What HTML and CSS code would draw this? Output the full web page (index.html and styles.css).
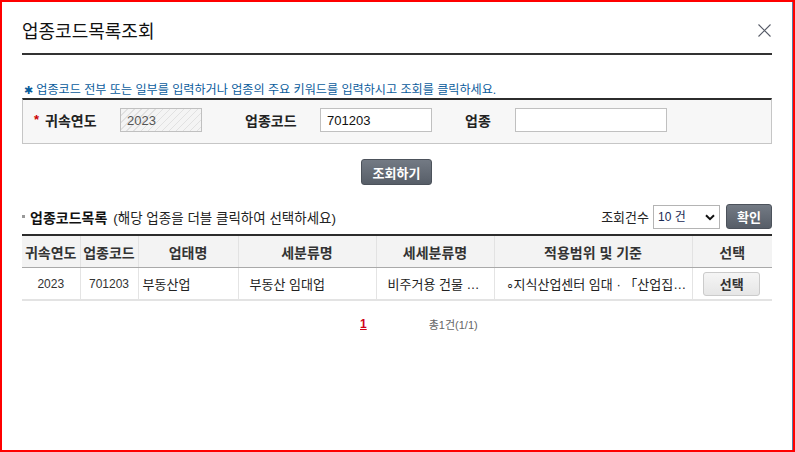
FILE: index.html
```html
<!DOCTYPE html>
<html lang="ko">
<head>
<meta charset="utf-8">
<title>업종코드목록조회</title>
<link rel="stylesheet" href="styles.css">
</head>
<body>
<div class="frame">
  <div class="dialog">
    <div class="head">
      <h1 class="title">업종코드목록조회</h1>
      <button class="close" type="button" aria-label="닫기">
        <svg width="13" height="13" viewBox="0 0 13 13"><path d="M0.5 0.5 L12.5 12.5 M12.5 0.5 L0.5 12.5" stroke="#555a66" stroke-width="1.1" fill="none"/></svg>
      </button>
    </div>
    <p class="guide"><span class="mark">✱</span> 업종코드 전부 또는 일부를 입력하거나 업종의 주요 키워드를 입력하시고 조회를 클릭하세요.</p>
    <div class="search">
      <span class="req">*</span>
      <label class="lbl l1">귀속연도</label>
      <input class="inp inp-year" value="2023" readonly>
      <label class="lbl l2">업종코드</label>
      <input class="inp inp-code" value="701203">
      <label class="lbl l3">업종</label>
      <input class="inp inp-name" value="">
    </div>
    <div class="btn-row"><button class="btn-dark btn-search" type="button">조회하기</button></div>
    <div class="list-head">
      <div class="list-title"><span class="sq"></span><strong>업종코드목록</strong><span class="hint">(해당 업종을 더블 클릭하여 선택하세요)</span></div>
      <div class="list-ctrl">
        <span class="cnt-label">조회건수</span>
        <div class="sel-wrap">
          <select class="sel"><option>10 건</option><option>20 건</option></select>
          <svg class="chev" width="10" height="7" viewBox="0 0 10 7"><path d="M1 1.2 L5 5.2 L9 1.2" stroke="#111" stroke-width="2" fill="none"/></svg>
        </div>
        <button class="btn-dark btn-ok" type="button">확인</button>
      </div>
    </div>
    <table class="grid">
      <colgroup>
        <col style="width:58px"><col style="width:58px"><col style="width:100px"><col style="width:138px"><col style="width:118px"><col style="width:198px"><col style="width:80px">
      </colgroup>
      <thead>
        <tr><th>귀속연도</th><th>업종코드</th><th>업태명</th><th>세분류명</th><th>세세분류명</th><th>적용범위 및 기준</th><th>선택</th></tr>
      </thead>
      <tbody>
        <tr>
          <td class="c num">2023</td>
          <td class="c num">701203</td>
          <td class="l tight">부동산업</td>
          <td class="l">부동산 임대업</td>
          <td class="l">비주거용 건물 …</td>
          <td class="l">∘지식산업센터 임대 · 「산업집…</td>
          <td class="c"><button class="btn-pick" type="button">선택</button></td>
        </tr>
      </tbody>
    </table>
    <div class="paging"><a class="pg">1</a><span class="total">총1건(1/1)</span></div>
  </div>
</div>
</body>
</html>
```
FILE: styles.css
```css
html, body {
  margin: 0;
  padding: 0;
  background: #fff;
}
body {
  font-family: "Liberation Sans", "Noto Sans CJK KR", sans-serif;
  color: #222;
}
.frame {
  width: 795px;
  height: 452px;
  box-sizing: border-box;
  border: 2px solid #ff0000;
}
.dialog {
  height: 100%;
  box-sizing: border-box;
  border-right: 1px solid #5b7ca3;
  padding: 0 20px;
}
.head {
  display: flex;
  justify-content: space-between;
  align-items: center;
  padding: 16px 0 11px;
  border-bottom: 2px solid #333;
}
.title {
  margin: 0;
  font-size: 18px;
  font-weight: normal;
  line-height: 24px;
  color: #111;
  font-family: "Noto Sans CJK KR", sans-serif;
}
.close {
  border: 0;
  background: none;
  padding: 0;
  margin: 0 1px 0 0;
  width: 13px;
  height: 13px;
  display: flex;
}
.guide {
  margin: 27px 0 0;
  height: 16px;
  font-size: 12.1px;
  line-height: 16px;
  color: #0a5c9c;
  white-space: nowrap;
}
.mark {
  font-size: 11px;
  margin-left: 2px;
}
.search {
  display: flex;
  align-items: center;
  background: #f7f7f7;
  border: 1px solid #c6c6c6;
  border-top: 2px solid #2c2c2c;
  padding: 8px 0 11px 11px;
}
.req {
  width: 11px;
  color: #cc0000;
  font-weight: bold;
  font-size: 13px;
  line-height: 14px;
}
.lbl {
  font-size: 14px;
  font-weight: bold;
  color: #222;
}
.l1, .l2 { width: 75px; }
.l3 { width: 50px; }
.inp {
  box-sizing: border-box;
  height: 24px;
  border: 1px solid #c0c0c0;
  background: #fff;
  font-family: "Liberation Sans", "Noto Sans CJK KR", sans-serif;
  font-size: 13px;
  color: #111;
  padding: 0 6px;
  margin: 0;
  outline: none;
}
.inp-year {
  width: 82px;
  margin-right: 43px;
  color: #555;
  background: repeating-linear-gradient(135deg, #f4f4f4 0 4px, #e1e1e1 4px 5px);
}
.inp-code { width: 112px; margin-right: 33px; }
.inp-name { width: 152px; }
.btn-row {
  margin-top: 15px;
  display: flex;
  justify-content: center;
}
.btn-dark {
  box-sizing: border-box;
  background: linear-gradient(#737a84, #575e68);
  border: 1px solid #4c525b;
  border-radius: 3px;
  color: #fff;
  font-weight: bold;
  font-size: 13px;
  font-family: "Noto Sans CJK KR", sans-serif;
  padding: 0;
  line-height: 1;
}
.btn-search {
  width: 71px;
  height: 26px;
  margin-left: -1px;
}
.list-head {
  margin-top: 19px;
  height: 25px;
  display: flex;
  justify-content: space-between;
  align-items: center;
}
.list-title {
  display: flex;
  align-items: center;
  font-size: 13.5px;
  color: #222;
}
.list-title strong {
  font-size: 14px;
  color: #111;
}
.sq {
  width: 3px;
  height: 3px;
  background: #999;
  margin-right: 5px;
}
.hint {
  margin-left: 6px;
}
.list-ctrl {
  display: flex;
  align-items: center;
}
.cnt-label {
  font-size: 13px;
  color: #222;
  margin-right: 4px;
}
.sel-wrap {
  position: relative;
  width: 67px;
  height: 24px;
}
.sel {
  appearance: none;
  -webkit-appearance: none;
  box-sizing: border-box;
  width: 100%;
  height: 100%;
  border: 1px solid #b4b4b4;
  border-radius: 0;
  background: #fff;
  font-family: "Liberation Sans", "Noto Sans CJK KR", sans-serif;
  font-size: 12px;
  color: #1a2a55;
  padding: 0 0 0 4px;
  margin: 0;
}
.chev {
  position: absolute;
  right: 5px;
  top: 9px;
  pointer-events: none;
}
.btn-ok {
  width: 46px;
  height: 25px;
  margin-left: 6px;
}
.grid {
  margin-top: 5px;
  width: 100%;
  border-collapse: collapse;
  table-layout: fixed;
  border-top: 2px solid #2c2c2c;
}
.grid th {
  height: 31px;
  padding: 0;
  background: #f3f3f3;
  font-size: 14px;
  font-weight: bold;
  color: #333;
  text-align: center;
  border-left: 1px solid #e2e2e2;
  border-bottom: 1px solid #a9a9a9;
  font-family: "Noto Sans CJK KR", sans-serif;
  white-space: nowrap;
  overflow: hidden;
}
.grid th:first-child,
.grid td:first-child {
  border-left: 0;
}
.grid td {
  height: 31px;
  padding: 0 0 0 11px;
  font-size: 13px;
  color: #222;
  border-left: 1px solid #e4e4e4;
  border-bottom: 2px solid #e3e3e3;
  white-space: nowrap;
  overflow: hidden;
}
.grid td.c {
  text-align: center;
  padding: 0;
}
.grid td.num {
  font-size: 12px;
  color: #333;
}
.grid td.tight {
  padding-left: 4px;
}
.btn-pick {
  box-sizing: border-box;
  width: 57px;
  height: 24px;
  border: 1px solid #cbcbcb;
  border-radius: 3px;
  background: linear-gradient(#f5f5f5, #e6e6e6);
  font-family: "Noto Sans CJK KR", sans-serif;
  font-size: 13px;
  font-weight: bold;
  color: #333;
  padding: 0;
  margin-left: -1px;
}
.paging {
  margin-top: 16px;
  padding-left: 338px;
  display: flex;
  align-items: center;
  height: 14px;
}
.pg {
  color: #d0021b;
  font-weight: bold;
  font-size: 12px;
  text-decoration: underline;
}
.total {
  margin-left: 62px;
  font-size: 11px;
  color: #666;
}
```
